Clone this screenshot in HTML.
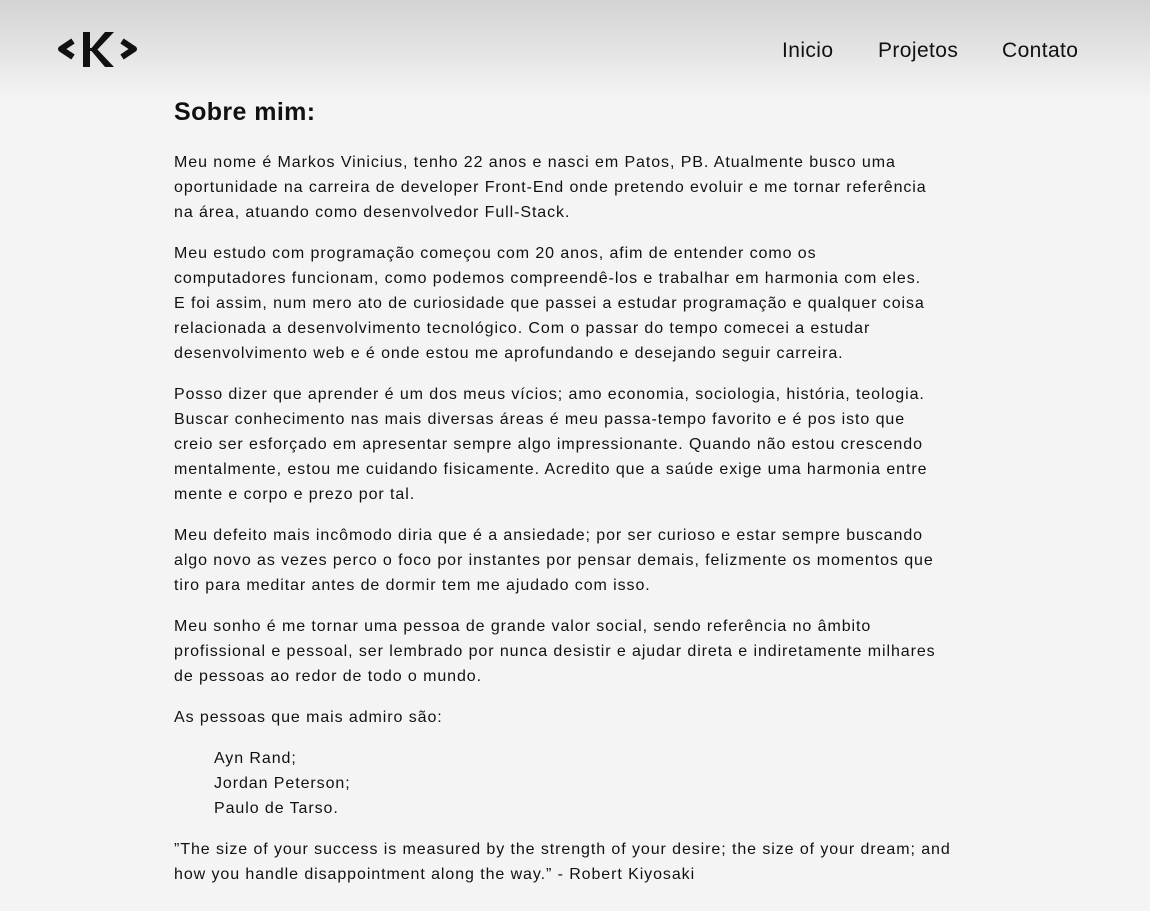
<!DOCTYPE html>
<html><head><meta charset="utf-8"><style>
html,body{margin:0;padding:0}
body{width:1150px;height:911px;overflow:hidden;background:#f4f4f4;font-family:"Liberation Sans",sans-serif;color:#111;position:relative}
header{position:absolute;left:0;top:0;width:1150px;height:100px;background:linear-gradient(#d3d3d3,#f4f4f4)}
.logo{position:absolute;left:55px;top:30px}
nav a{position:absolute;top:39px;font-size:21px;color:#111;text-decoration:none;letter-spacing:0.4px}
h1{position:absolute;left:174px;top:98px;margin:0;font-size:25px;font-weight:bold;letter-spacing:0.4px}
.c{position:absolute;left:174px;top:150px;font-size:16px;line-height:25px;letter-spacing:0.92px;white-space:nowrap}
.c p{margin:0 0 16px}
.c .ind{padding-left:40px}
</style></head><body>
<header>
<svg class="logo" width="86" height="38" viewBox="0 0 86 38">
<path d="M18 11 L6 19 L18 27" fill="none" stroke="#111" stroke-width="6" stroke-linejoin="round"/>
<path d="M67 11 L79 19 L67 27" fill="none" stroke="#111" stroke-width="6" stroke-linejoin="round"/>
<rect x="28" y="2" width="7" height="35" fill="#111"/>
<path d="M34 21 L50 2 L59 2 L41 21 Z M34 18 L41 18 L59 37 L50 37 Z" fill="#111"/>
</svg>
<nav><a style="left:782px">Inicio</a><a style="left:878px">Projetos</a><a style="left:1002px">Contato</a></nav>
</header>
<h1>Sobre mim:</h1>
<div class="c">
<p>Meu nome é Markos Vinicius, tenho 22 anos e nasci em Patos, PB. Atualmente busco uma<br>oportunidade na carreira de developer Front-End onde pretendo evoluir e me tornar referência<br>na área, atuando como desenvolvedor Full-Stack.</p>
<p>Meu estudo com programação começou com 20 anos, afim de entender como os<br>computadores funcionam, como podemos compreendê-los e trabalhar em harmonia com eles.<br>E foi assim, num mero ato de curiosidade que passei a estudar programação e qualquer coisa<br>relacionada a desenvolvimento tecnológico. Com o passar do tempo comecei a estudar<br>desenvolvimento web e é onde estou me aprofundando e desejando seguir carreira.</p>
<p>Posso dizer que aprender é um dos meus vícios; amo economia, sociologia, história, teologia.<br>Buscar conhecimento nas mais diversas áreas é meu passa-tempo favorito e é pos isto que<br>creio ser esforçado em apresentar sempre algo impressionante. Quando não estou crescendo<br>mentalmente, estou me cuidando fisicamente. Acredito que a saúde exige uma harmonia entre<br>mente e corpo e prezo por tal.</p>
<p>Meu defeito mais incômodo diria que é a ansiedade; por ser curioso e estar sempre buscando<br>algo novo as vezes perco o foco por instantes por pensar demais, felizmente os momentos que<br>tiro para meditar antes de dormir tem me ajudado com isso.</p>
<p>Meu sonho é me tornar uma pessoa de grande valor social, sendo referência no âmbito<br>profissional e pessoal, ser lembrado por nunca desistir e ajudar direta e indiretamente milhares<br>de pessoas ao redor de todo o mundo.</p>
<p>As pessoas que mais admiro são:</p>
<p class="ind">Ayn Rand;<br>Jordan Peterson;<br>Paulo de Tarso.</p>
<p>”The size of your success is measured by the strength of your desire; the size of your dream; and<br>how you handle disappointment along the way.” - Robert Kiyosaki</p>
</div>
</body></html>
